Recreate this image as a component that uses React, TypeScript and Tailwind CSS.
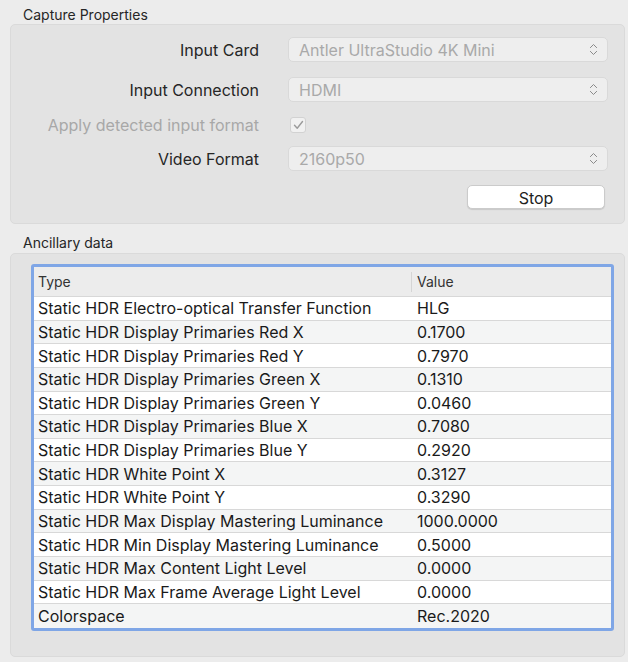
import { ChevronsUpDown } from "lucide-react";

const rows: [string, string][] = [
  ["Static HDR Electro-optical Transfer Function", "HLG"],
  ["Static HDR Display Primaries Red X", "0.1700"],
  ["Static HDR Display Primaries Red Y", "0.7970"],
  ["Static HDR Display Primaries Green X", "0.1310"],
  ["Static HDR Display Primaries Green Y", "0.0460"],
  ["Static HDR Display Primaries Blue X", "0.7080"],
  ["Static HDR Display Primaries Blue Y", "0.2920"],
  ["Static HDR White Point X", "0.3127"],
  ["Static HDR White Point Y", "0.3290"],
  ["Static HDR Max Display Mastering Luminance", "1000.0000"],
  ["Static HDR Min Display Mastering Luminance", "0.5000"],
  ["Static HDR Max Content Light Level", "0.0000"],
  ["Static HDR Max Frame Average Light Level", "0.0000"],
  ["Colorspace", "Rec.2020"],
];

function Select({ value }: { value: string }) {
  return (
    <div className="w-[320px] h-[25px] flex items-center justify-between pl-[10px] pr-[6px] bg-[#eeeeee] border border-[#d9d9d9] rounded-[5px]">
      <span className="text-[16px] text-[#a9a9a9]">{value}</span>
      <ChevronsUpDown size={15} strokeWidth={1.6} className="text-[#8a8a8a]" />
    </div>
  );
}

function FormRow({
  label,
  className,
  children,
}: {
  label: string;
  className?: string;
  children: React.ReactNode;
}) {
  return (
    <div className={`flex items-center ${className ?? ""}`}>
      <div className="w-[248px] text-right text-[16px] text-[#262626]">
        {label}
      </div>
      <div className="ml-[29px]">{children}</div>
    </div>
  );
}

export default function App() {
  return (
    <div
      className="w-[628px] h-[662px] bg-[#ececec] overflow-hidden"
      style={{ fontFamily: "Inter, 'Liberation Sans', sans-serif" }}
    >
      <div className="pl-[23px] pt-[6px] h-[24px] text-[14px] leading-[18px] text-[#262626]">
        Capture Properties
      </div>

      {/* Capture box */}
      <div className="ml-[10px] w-[615px] h-[200px] bg-[#e3e3e3] border border-[#dadada] rounded-[5px] pt-[12px]">
        <FormRow label="Input Card">
          <Select value="Antler UltraStudio 4K Mini" />
        </FormRow>
        <FormRow label="Input Connection" className="mt-[15px]">
          <Select value="HDMI" />
        </FormRow>
        <div className="flex items-center h-[16px] mt-[15px]">
          <div className="w-[248px] text-right text-[16px] text-[#a8a8a8]">
            Apply detected input format
          </div>
          <div className="ml-[31px] w-[16px] h-[16px] bg-[#f1f1f1] border border-[#d2d2d2] rounded-[3px] flex items-center justify-center">
            <svg width="11" height="10" viewBox="0 0 11 10">
              <path
                d="M1.5 5.2 L4.2 8.2 L9.5 1.5"
                fill="none"
                stroke="#9b9b9b"
                strokeWidth="1.4"
                strokeLinecap="round"
                strokeLinejoin="round"
              />
            </svg>
          </div>
        </div>
        <FormRow label="Video Format" className="mt-[13px]">
          <Select value="2160p50" />
        </FormRow>
        <div className="flex justify-end mt-[14px] pr-[19px]">
          <button className="w-[138px] h-[24px] bg-white border border-[#cbcbcb] rounded-[5px] shadow-[0_1px_1px_rgba(0,0,0,0.12)] text-[16px] text-[#1f1f1f]">
            Stop
          </button>
        </div>
      </div>

      <div className="pl-[23px] pt-[10px] h-[29px] text-[14px] leading-[18px] text-[#262626]">
        Ancillary data
      </div>

      {/* Ancillary box */}
      <div className="ml-[10px] w-[615px] h-[404px] bg-[#e3e3e3] border border-[#dadada] rounded-[5px] pt-[10px] pl-[20px]">
        <div className="w-[583px] border-[3px] border-[#7fa6e6] rounded-[3px] bg-white">
          <div className="flex h-[30px] items-center bg-[#ececec] border-b border-[#d8d8d8] text-[14px] text-[#333]">
            <div className="w-[377px] pl-[4px]">Type</div>
            <div className="w-px h-[20px] bg-[#d5d5d5]" />
            <div className="pl-[5px]">Value</div>
          </div>
          {rows.map(([type, value], i) => (
            <div
              key={type}
              className={`flex items-center h-[23.64px] text-[16px] text-[#1a1a1a] ${
                i < rows.length - 1 ? "border-b border-[#d8d8d8]" : ""
              } ${i % 2 === 0 ? "bg-white" : "bg-[#f4f5f5]"}`}
            >
              <div className="w-[377px] pl-[4px] whitespace-nowrap">{type}</div>
              <div className="pl-[6px]">{value}</div>
            </div>
          ))}
        </div>
      </div>
    </div>
  );
}
